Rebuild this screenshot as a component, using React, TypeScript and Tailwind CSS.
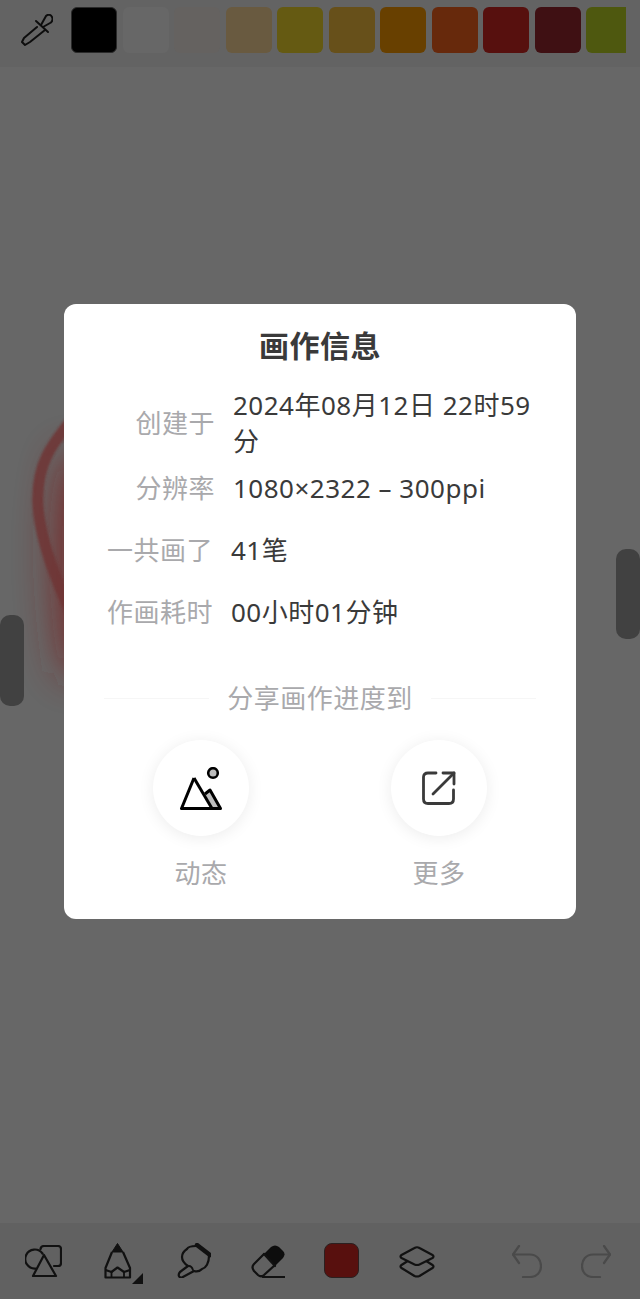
import React from 'react';

const swatches = ['#000000', '#676767', '#656260', '#695a40', '#655a12', '#67501a', '#684000', '#67290c', '#57100e', '#3f1013'];

function InfoRow({ label, value, labelW, valueCls }: { label: string; value: React.ReactNode; labelW: string; valueCls: string }) {
  return (
    <div className="flex items-center">
      <div className={`${labelW} shrink-0 text-right text-[26px] leading-[36px] text-[#a9a9ac]`}>{label}</div>
      <div className={`${valueCls} text-[26px] leading-[36px] text-[#3a3a3a]`}>{value}</div>
    </div>
  );
}

export default function App() {
  return (
    <div className="relative h-[1299px] w-[640px] overflow-hidden bg-[#676767] font-['Noto_Sans','Noto_Sans_CJK_SC',sans-serif] tracking-[0.5px]">
      {/* top palette */}
      <div className="flex h-[67px] items-start bg-[#636363] pt-[7px]">
        <svg className="mt-[7px] ml-[21px] shrink-0" width="32" height="32" viewBox="0 0 32 32" fill="none" stroke="#0d0d0d" strokeWidth="2" strokeLinejoin="round" strokeLinecap="round">
          <path d="M20 11 L25 2 C27 0 30 0.500 31 3 C32 5 31.500 7 30 8.500 L22 13" />
          <path d="M15 7 L27 18" />
          <path d="M16 13 L3 24 L1 28 L4 31 L9 28 L24 16" />
        </svg>
        <div className="ml-[18px] flex gap-[5.5px]">
          {swatches.map((c, i) => (
            <div key={c} className={`h-[46px] w-[46px] shrink-0 rounded-[6px] ${i === 0 ? 'border border-[#2a2a2a]' : ''}`} style={{ backgroundColor: c }} />
          ))}
          <div className="h-[46px] w-[40px] shrink-0 rounded-l-[6px] bg-[#4e580f]" />
        </div>
      </div>

      {/* canvas stroke, below the dialog */}
      <svg className="absolute top-[380px] left-0" width="120" height="340" viewBox="0 380 120 340" fill="none">
        <defs>
          <filter id="glow" filterUnits="userSpaceOnUse" x="-60" y="320" width="260" height="460">
            <feGaussianBlur stdDeviation="20" />
          </filter>
          <filter id="soft" filterUnits="userSpaceOnUse" x="-20" y="360" width="200" height="360">
            <feGaussianBlur stdDeviation="1.2" />
          </filter>
        </defs>
        <path d="M95 460 C80 520 85 600 95 670" stroke="#7a2020" strokeWidth="60" filter="url(#glow)" opacity="0.85" />
        <path d="M80 410 C50 445 36 465 38 505 C40 540 58 590 85 640" stroke="#6f3434" strokeWidth="11" filter="url(#soft)" opacity="0.85" />
      </svg>

      {/* side handles */}
      <div className="absolute top-[615px] left-0 h-[91px] w-[24px] rounded-[10px] bg-[#414141]" />
      <div className="absolute top-[549px] right-0 h-[90px] w-[24px] rounded-[10px] bg-[#414141]" />

      {/* bottom bar */}
      <div className="absolute right-0 bottom-0 left-0 flex h-[76px] items-start bg-[#616161]">
        <svg className="mt-[22px] ml-[25px] shrink-0" width="37" height="32" viewBox="0 0 37 32" fill="none" stroke="#111" strokeWidth="2.2" strokeLinejoin="round" strokeLinecap="round">
          <path d="M15.500 4 Q16 1 19 1 H33 Q36 1 36 4 V18 Q36 21 33 21 H29" />
          <path d="M17.500 8.500 A9.500 9.500 0 1 0 10.500 23.500" />
          <path d="M19 10 L31 31 H8 Z" />
        </svg>
        <svg className="mt-[20px] ml-[42px] shrink-0" width="39" height="41" viewBox="0 0 39 41" fill="none" stroke="#111" strokeWidth="2.2" strokeLinejoin="round">
          <path d="M13.500 0.500 L8 9 H19 Z" fill="#111" stroke="#111" strokeWidth="1" />
          <path d="M8 9 L1.500 25 V34.500 H26 V25 L19 9" />
          <path d="M1.500 27 L7.500 29 L13.500 24.500 L20 29 L26 27" />
          <path d="M7.500 29 V34 M20 29 V34" strokeWidth="1.800" />
          <path d="M39 30 V41 H28 Z" fill="#111" stroke="none" />
        </svg>
        <svg className="mt-[20px] ml-[34px] shrink-0" width="34" height="35" viewBox="0 0 34 35" fill="none" stroke="#111" strokeWidth="2.2" strokeLinejoin="round" strokeLinecap="round">
          <path d="M20 2 L33 12" strokeWidth="4.500" />
          <path d="M19 3 C14 3 11 4 10 6 C7 8 5 11 5 14 C5 18 8 21 11 23 L3 29 C0.500 32 2 35 5 34.500 L17 28 C20 29 23 28 25 26 C29 25 32 20 32 13" />
          <path d="M12 23 C14 23 15 24 16 27" strokeWidth="1.800" />
        </svg>
        <svg className="mt-[22px] ml-[40px] shrink-0" width="34" height="33" viewBox="0 0 34 33" fill="none" stroke="#111" strokeWidth="2.2" strokeLinejoin="round" strokeLinecap="round">
          <path d="M13 9 L20 2 Q24 -1 28 2 L32 6 Q35 9 32 13 L24 21 Z" fill="#0d0d0d" stroke="none" />
          <path d="M13 9 L3 19 Q0 22 3 26 L7 30 Q10 32.500 13 30 L24 20" />
          <path d="M13 9 L24 21" />
          <path d="M12 32 H33.500" />
        </svg>
        <div className="mt-[20px] ml-[39px] h-[35px] w-[35px] shrink-0 rounded-[8px] border border-[#2b2020] bg-[#58100e]" />
        <svg className="mt-[23px] ml-[40px] shrink-0" width="36" height="32" viewBox="0 0 36 32" fill="none" stroke="#111" strokeWidth="2.2" strokeLinejoin="round" strokeLinecap="round">
          <path d="M15.500 2 Q18 0.500 20.500 2 L33.500 9 Q35.500 10.500 33.500 12 L20.500 18.500 Q18 19.500 15.500 18.500 L2.500 12 Q0.500 10.500 2.500 9 Z" />
          <path d="M8 15.500 L2.500 19 Q0.500 20.500 2.500 22 L15.500 30 Q18 31 20.500 30 L33.500 22 Q35.500 20.500 33.500 19 L28 15.500" />
        </svg>
        <svg className="mt-[22px] ml-[77px] shrink-0" width="30" height="33" viewBox="0 0 30 33" fill="none" stroke="#4a4a4a" strokeWidth="2.2" strokeLinejoin="round" strokeLinecap="round">
          <path d="M7 1 L1 9.500 L7 18" />
          <path d="M1 9.500 H18 C25 9.500 29 15 29 21 C29 27 25 32 18 32 H11" />
        </svg>
        <svg className="mt-[22px] ml-[39px] shrink-0" width="30" height="33" viewBox="0 0 30 33" fill="none" stroke="#4a4a4a" strokeWidth="2.2" strokeLinejoin="round" strokeLinecap="round">
          <path d="M23 1 L29 9.500 L23 18" />
          <path d="M29 9.500 H12 C5 9.500 1 15 1 21 C1 27 5 32 12 32 H19" />
        </svg>
      </div>

      {/* dialog */}
      <div className="absolute top-[304px] left-[64px] h-[615px] w-[512px] rounded-[12px] bg-white">
        <div className="pt-[23px] text-center text-[30px] leading-[38px] font-bold text-[#3a3a3a]">画作信息</div>

        <div className="mt-[22px] flex flex-col">
          <InfoRow labelW="w-[151px]" valueCls="ml-[18px] w-[310px]" label="创建于" value={<>2024年08月12日 22时59<br />分</>} />
          <div className="mt-[11px]">
            <InfoRow labelW="w-[151px]" valueCls="ml-[18px]" label="分辨率" value="1080×2322 – 300ppi" />
          </div>
          <div className="mt-[26px]">
            <InfoRow labelW="w-[149px]" valueCls="ml-[18px]" label="一共画了" value="41笔" />
          </div>
          <div className="mt-[26px]">
            <InfoRow labelW="w-[149px]" valueCls="ml-[18px]" label="作画耗时" value="00小时01分钟" />
          </div>
        </div>

        <div className="mt-[50px] flex items-center px-[40px]">
          <div className="h-px flex-1 bg-[#f6f6f6]" />
          <div className="px-[18px] text-[26px] leading-[36px] text-[#a9a9ac]">分享画作进度到</div>
          <div className="h-px flex-1 bg-[#f6f6f6]" />
        </div>

        <div className="mt-[24px] flex justify-center gap-[142px]">
          <div className="flex w-[96px] flex-col items-center">
            <div className="flex h-[96px] w-[96px] items-center justify-center rounded-full bg-white shadow-[0_2px_16px_rgba(0,0,0,0.08)]">
              <svg width="42" height="43" viewBox="0 0 42 43" fill="none" strokeLinejoin="round">
                <circle cx="33" cy="6" r="4.800" fill="#bdbdbd" stroke="#000" strokeWidth="2.600" />
                <path d="M25 27 L30 23 L41 42 H33 Z" fill="#bdbdbd" />
                <path d="M14 11 L1.500 41.500 H40.500 L30 23 L25 27" stroke="#000" strokeWidth="3" />
                <path d="M14 11 L32 41.500" stroke="#000" strokeWidth="3" />
              </svg>
            </div>
            <div className="mt-[19px] text-[26px] leading-[36px] text-[#a9a9ac]">动态</div>
          </div>
          <div className="flex w-[96px] flex-col items-center">
            <div className="flex h-[96px] w-[96px] items-center justify-center rounded-full bg-white shadow-[0_2px_16px_rgba(0,0,0,0.08)]">
              <svg width="34" height="34" viewBox="0 0 34 34" fill="none" stroke="#3a3a3a" strokeWidth="2.800" strokeLinecap="round" strokeLinejoin="round">
                <path d="M14 2 H6 C3 2 1.500 3.500 1.500 6 V28 C1.500 31 3 32.500 6 32.500 H27 C30 32.500 31.500 31 31.500 28 V19" />
                <path d="M21 2 H32 V13" />
                <path d="M32 2 L11 23" />
              </svg>
            </div>
            <div className="mt-[19px] text-[26px] leading-[36px] text-[#a9a9ac]">更多</div>
          </div>
        </div>
      </div>
    </div>
  );
}
